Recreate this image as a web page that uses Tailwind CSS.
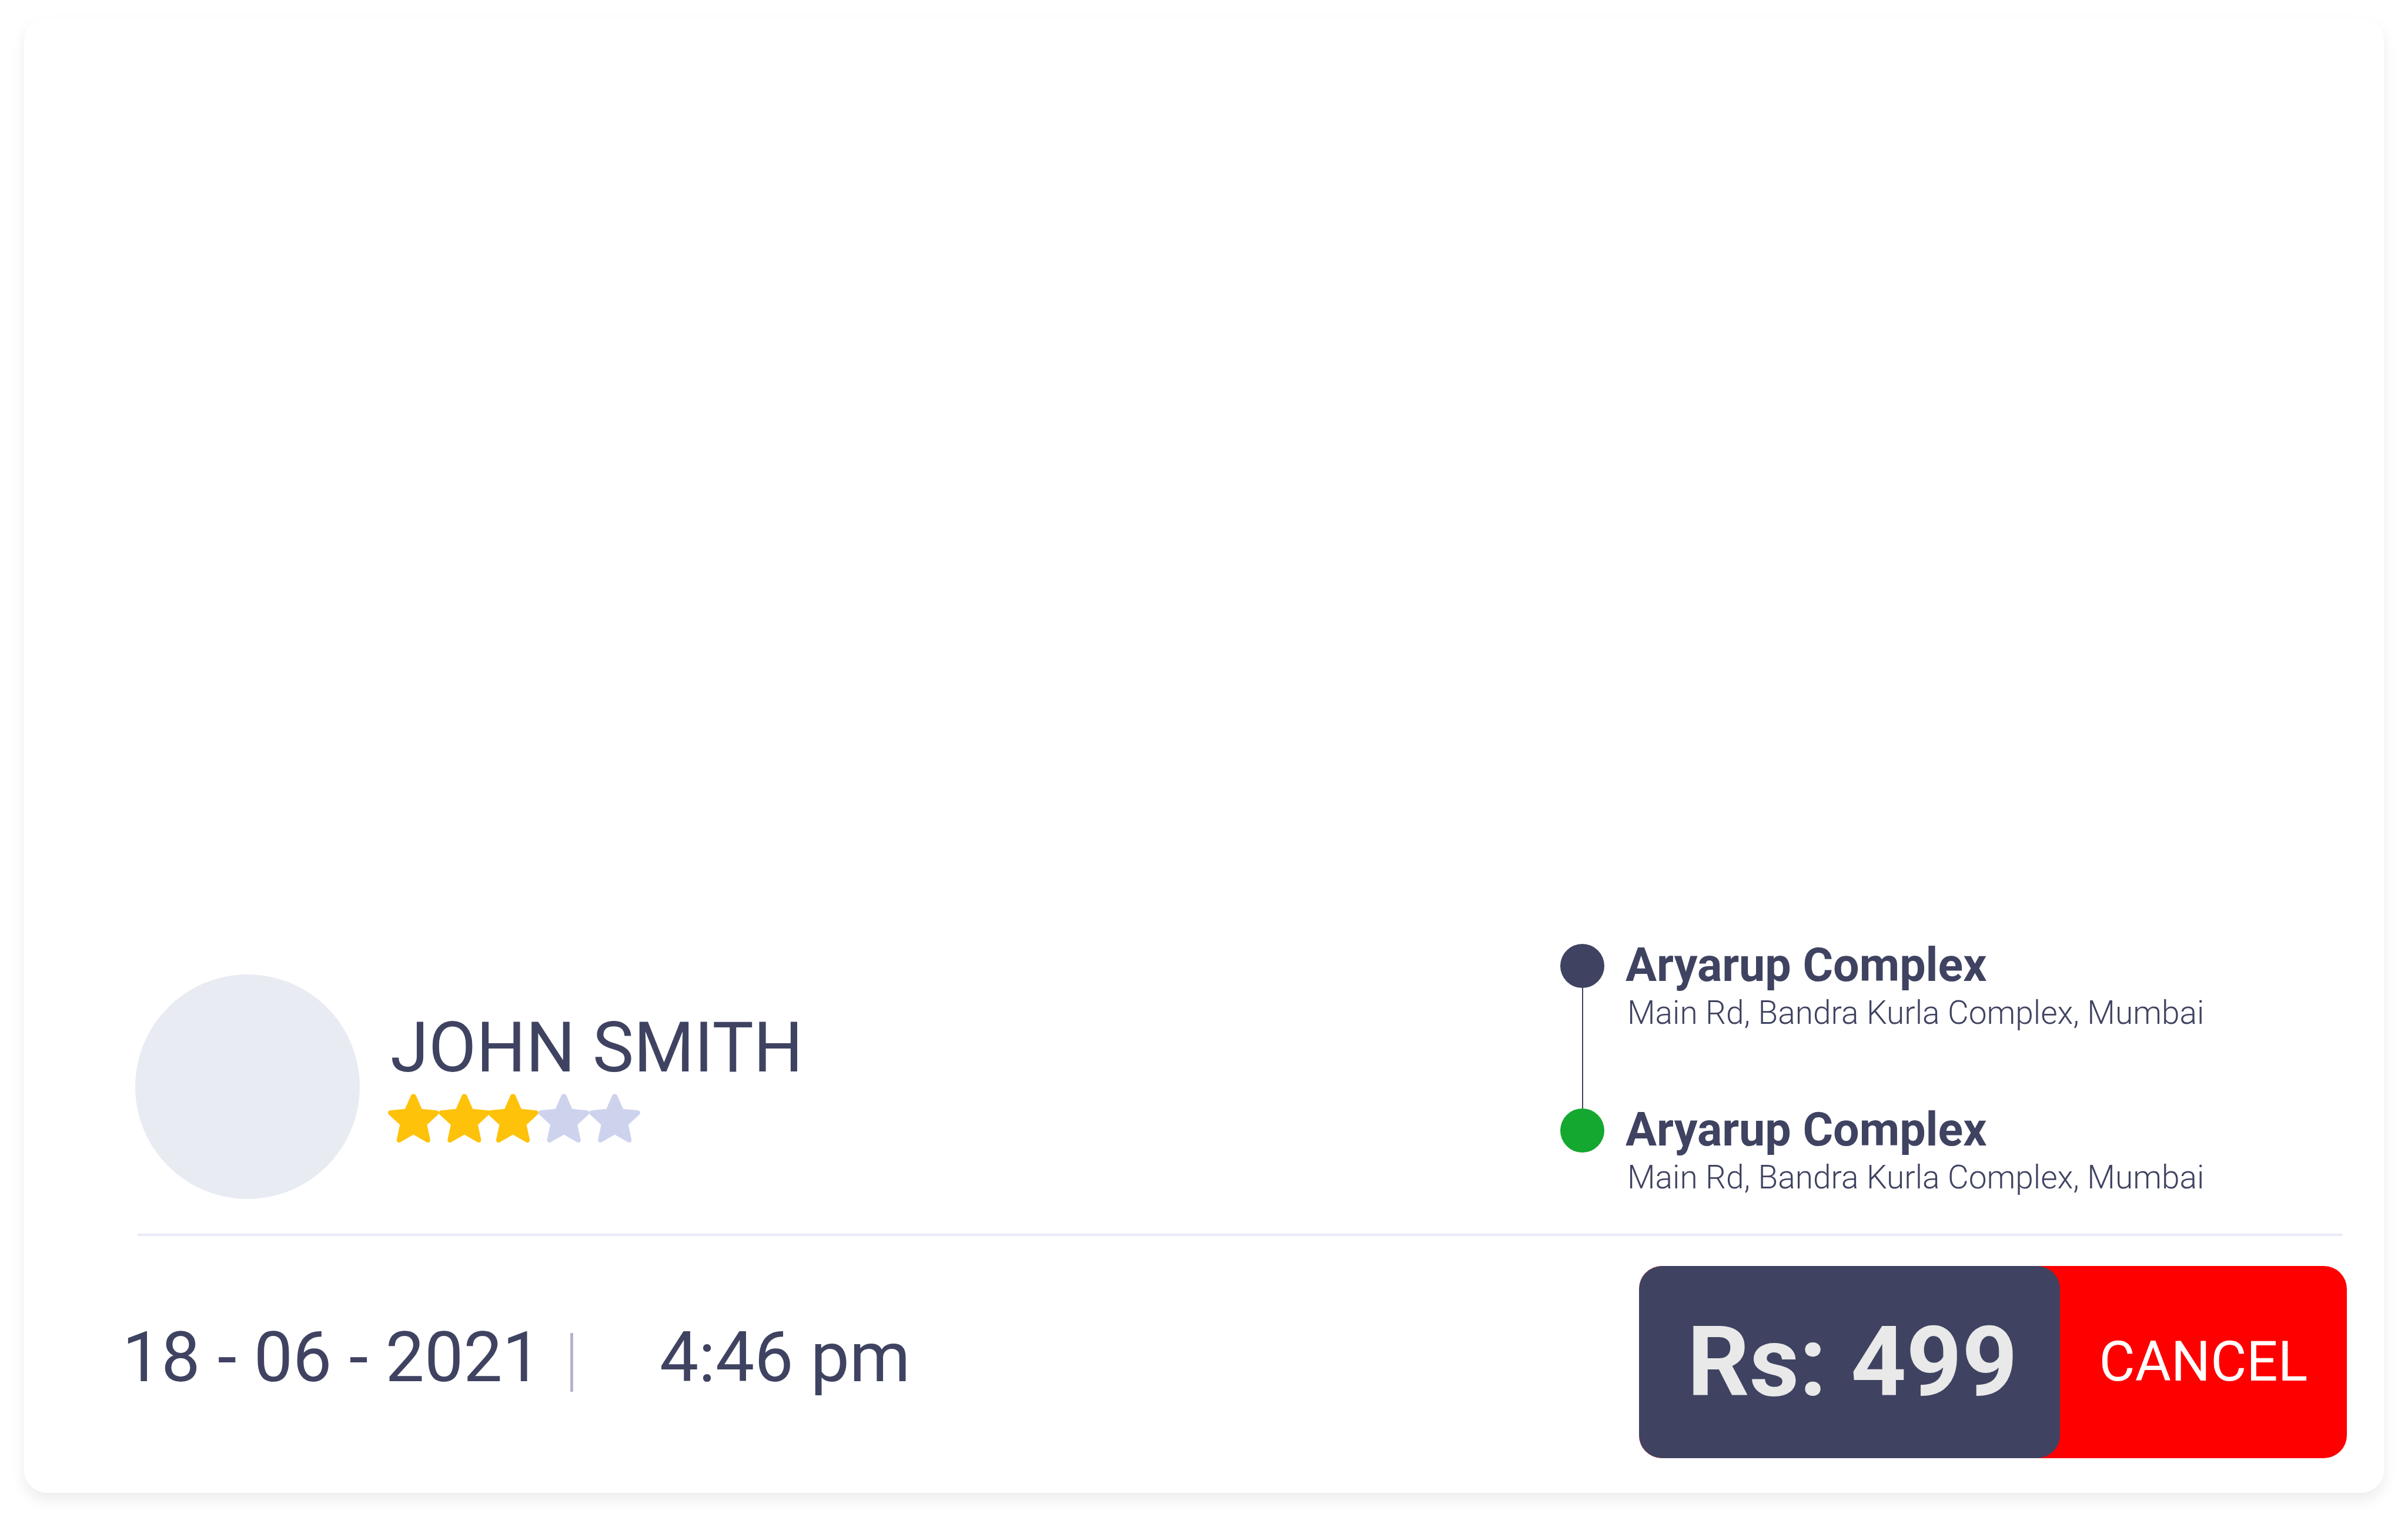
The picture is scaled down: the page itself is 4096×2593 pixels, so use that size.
<!DOCTYPE html>
<html lang="en">
<head>
<meta charset="utf-8">
<meta name="viewport" content="width=device-width, initial-scale=1">
<title>Booking</title>
<script src="https://cdn.jsdelivr.net/npm/@tailwindcss/browser@4"></script>
</head>
<body class="flex min-h-screen flex-col bg-white px-[41px] pt-[30px] pb-[53px] font-['Roboto',sans-serif] text-[#3f4361]">
<main class="flex grow flex-col justify-end rounded-[39px] bg-white pb-[59px] shadow-[0_12px_24px_rgba(0,0,0,0.08)]">

  <section class="ml-[189px] mr-[63px] flex items-end justify-between pb-[59px]">
    <div class="flex items-center gap-12">
      <div class="size-[382px] shrink-0 rounded-full bg-[#e8ebf2]"></div>
      <div class="flex flex-col gap-4 pb-[30px]">
        <h1 class="pl-1 text-[118px] leading-[120px] whitespace-nowrap">JOHN SMITH</h1>
        <svg class="h-[87px] w-[429px]" viewBox="0 0 436 88" role="img" aria-label="3 out of 5 stars">
          <defs>
            <path id="star" d="M39.500 5C41 1 47 1 48.500 5L58.500 28L84 30.500C88 31 89.500 35 86.500 38L67.500 55.500L73 81C73.500 85 70 87.500 66.500 85.500L44 72.500L21.500 85.500C18 87.500 14.500 85 15 81L20.500 55.500L1.500 38C-1.500 35 0 31 4 30.500L29.500 28Z"/>
          </defs>
          <g fill="#ced3ed">
            <use href="#star" x="260"/>
            <use href="#star" x="348"/>
          </g>
          <g fill="#ffc20a">
            <use href="#star" x="0"/>
            <use href="#star" x="88"/>
            <use href="#star" x="172"/>
          </g>
        </svg>
      </div>
    </div>

    <ol class="w-[1338px]">
      <li class="flex h-[280px] gap-9">
        <div class="flex w-[75px] shrink-0 flex-col items-center">
          <span class="size-[75px] rounded-full bg-[#3f4361]"></span>
          <span class="w-[2px] grow bg-[#3f4361]"></span>
        </div>
        <div>
          <h2 class="text-[79px] leading-[72px] font-bold">Aryarup Complex</h2>
          <p class="mt-2 pl-[3px] text-[55px] leading-[74px] font-light">Main Rd, Bandra Kurla Complex, Mumbai</p>
        </div>
      </li>
      <li class="flex gap-9">
        <span class="size-[75px] shrink-0 rounded-full bg-[#14a831]"></span>
        <div>
          <h2 class="text-[79px] leading-[72px] font-bold">Aryarup Complex</h2>
          <p class="mt-2 pl-[3px] text-[55px] leading-[74px] font-light">Main Rd, Bandra Kurla Complex, Mumbai</p>
        </div>
      </li>
    </ol>
  </section>

  <hr class="mr-[71px] ml-[193px] border-t-4 border-[#e8ebf5]">

  <section class="mt-[51px] mr-[63px] ml-[167px] flex items-center justify-between">
    <div class="flex items-center text-[118px] leading-[120px] whitespace-nowrap">
      <time datetime="2021-06-18" class="w-[762px] pb-4">18 - 06 - 2021</time>
      <span class="h-[100px] w-[5px] bg-[#b3b5ca]"></span>
      <time datetime="16:46" class="ml-[147px] pb-4">4:46 pm</time>
    </div>
    <div class="flex h-[327px] w-[1204px] overflow-hidden rounded-[39px] bg-[#ff0000]">
      <p class="flex w-[716px] items-center rounded-[39px] bg-[#3f4361] pl-[82px] text-[165px] font-bold text-[#e9e9e9]">Rs: 499</p>
      <button type="button" class="grow cursor-pointer text-[94px] text-white">CANCEL</button>
    </div>
  </section>
</main>
</body>
</html>
